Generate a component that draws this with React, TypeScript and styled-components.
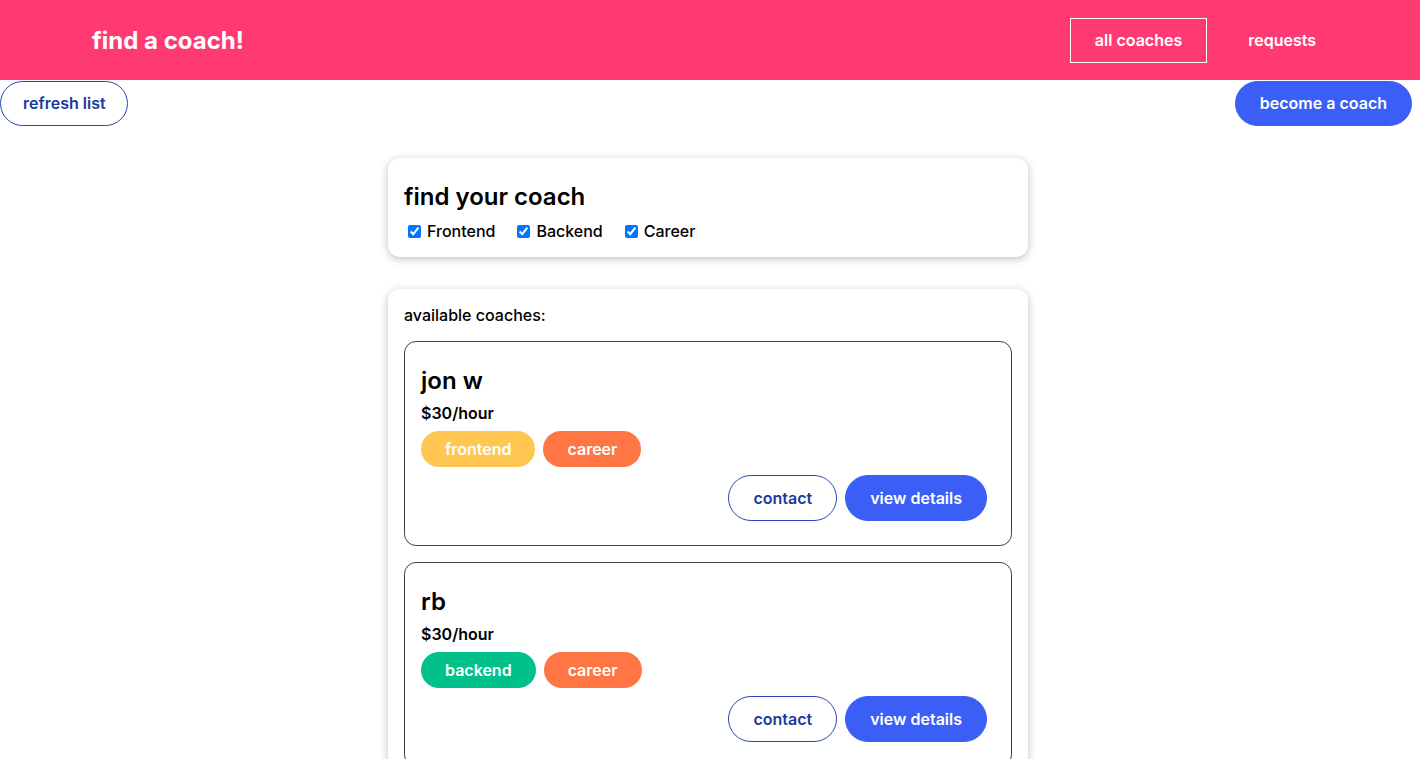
import React from "react";
import styled, { createGlobalStyle } from "styled-components";

const GlobalStyle = createGlobalStyle`
  * { box-sizing: border-box; }
  html, body { margin: 0; padding: 0; background: #fff; }
  body { font-family: Inter, "Noto Sans", sans-serif; color: #000; }
`;

const Header = styled.header`
  height: 80px;
  background: #ff3a73;
  display: flex;
  align-items: center;
  justify-content: space-between;
  padding: 0 79px 0 92px;
`;

const Title = styled.h1`
  margin: 0;
  font-size: 24px;
  font-weight: 700;
  color: #fff;
`;

const Nav = styled.nav`
  display: flex;
  gap: 16px;
`;

const NavLink = styled.a<{ $active?: boolean }>`
  display: block;
  padding: 12px 24px;
  line-height: 19px;
  font-size: 16px;
  font-weight: 600;
  color: #fff;
  text-decoration: none;
  border: 1px solid ${(p) => (p.$active ? "#fff" : "transparent")};
`;

const Controls = styled.div`
  display: flex;
  justify-content: space-between;
  padding: 1px 8px 0 0;
`;

const Button = styled.button<{ $outline?: boolean }>`
  font-family: inherit;
  font-size: 16px;
  font-weight: 600;
  height: 45px;
  padding: 0 24px 1px;
  border-radius: 30px;
  cursor: pointer;
  border: 1px solid ${(p) => (p.$outline ? "#2a48b0" : "#3a5ef6")};
  background: ${(p) => (p.$outline ? "#fff" : "#3a5ef6")};
  color: ${(p) => (p.$outline ? "#1b3aa0" : "#fff")};
`;

const RefreshButton = styled(Button)`
  padding: 0 21px 1px 22px;
`;

const ActionButton = styled(Button)`
  height: 46px;
  padding: 0 24px;
`;

const Page = styled.div`
  padding-right: 4px;
`;

const Main = styled.main`
  width: 640px;
  margin: 32px auto 0;
  display: flex;
  flex-direction: column;
  gap: 32px;
`;

const Card = styled.section`
  background: #fff;
  border-radius: 12px;
  box-shadow: 0 2px 8px rgba(0, 0, 0, 0.26);
  padding: 16px;
`;

const FilterTitle = styled.h2`
  margin: 8px 0 0;
  font-size: 24px;
  line-height: 29px;
  font-weight: 600;
`;

const FilterRow = styled.div`
  display: flex;
  align-items: center;
  gap: 18px;
  margin-top: 10px;
  height: 20px;
`;

const FilterLabel = styled.label`
  display: flex;
  align-items: center;
  gap: 6px;
  font-size: 16px;
  font-weight: 500;
  line-height: 20px;
`;

const Checkbox = styled.input`
  width: 13px;
  height: 13px;
  margin: 0 0 0 4px;
`;

const ListLabel = styled.div`
  font-size: 16px;
  font-weight: 500;
  line-height: 20px;
`;

const CoachList = styled.ul`
  list-style: none;
  margin: 16px 0 0;
  padding: 0;
  display: flex;
  flex-direction: column;
  gap: 16px;
`;

const CoachItem = styled.li`
  border: 1px solid #424242;
  border-radius: 12px;
  padding: 24px 16px;
  display: flex;
  flex-direction: column;
  gap: 8px;
`;

const CoachName = styled.h3`
  margin: 0;
  font-size: 24px;
  line-height: 29px;
  font-weight: 600;
`;

const Rate = styled.h4`
  margin: 0;
  font-size: 16px;
  line-height: 20px;
  font-weight: 600;
`;

const Badges = styled.div`
  display: flex;
  gap: 8px;
`;

const badgeColors: Record<string, string> = {
  frontend: "#ffc751",
  backend: "#00c18a",
  career: "#ff7644",
};

const Badge = styled.span<{ $type: string }>`
  height: 36px;
  padding: 0 24px;
  display: flex;
  align-items: center;
  border-radius: 18px;
  font-size: 16px;
  font-weight: 600;
  color: #fff;
  background: ${(p) => badgeColors[p.$type]};
`;

const Actions = styled.div`
  display: flex;
  justify-content: flex-end;
  gap: 8px;
  padding-right: 8px;
`;

const coaches = [
  { name: "jon w", rate: 30, areas: ["frontend", "career"] },
  { name: "rb", rate: 30, areas: ["backend", "career"] },
];

export default function App() {
  return (
    <>
      <GlobalStyle />
      <Header>
        <Title>find a coach!</Title>
        <Nav>
          <NavLink $active href="#">all coaches</NavLink>
          <NavLink href="#">requests</NavLink>
        </Nav>
      </Header>
      <Controls>
        <RefreshButton $outline>refresh list</RefreshButton>
        <Button>become a coach</Button>
      </Controls>
      <Page>
        <Main>
          <Card>
            <FilterTitle>find your coach</FilterTitle>
            <FilterRow>
              <FilterLabel>
                <Checkbox type="checkbox" defaultChecked />
                Frontend
              </FilterLabel>
              <FilterLabel>
                <Checkbox type="checkbox" defaultChecked />
                Backend
              </FilterLabel>
              <FilterLabel>
                <Checkbox type="checkbox" defaultChecked />
                Career
              </FilterLabel>
            </FilterRow>
          </Card>
          <Card>
            <ListLabel>available coaches:</ListLabel>
            <CoachList>
              {coaches.map((c) => (
                <CoachItem key={c.name}>
                  <CoachName>{c.name}</CoachName>
                  <Rate>${c.rate}/hour</Rate>
                  <Badges>
                    {c.areas.map((a) => (
                      <Badge key={a} $type={a}>{a}</Badge>
                    ))}
                  </Badges>
                  <Actions>
                    <ActionButton $outline>contact</ActionButton>
                    <ActionButton>view details</ActionButton>
                  </Actions>
                </CoachItem>
              ))}
            </CoachList>
          </Card>
        </Main>
      </Page>
    </>
  );
}
